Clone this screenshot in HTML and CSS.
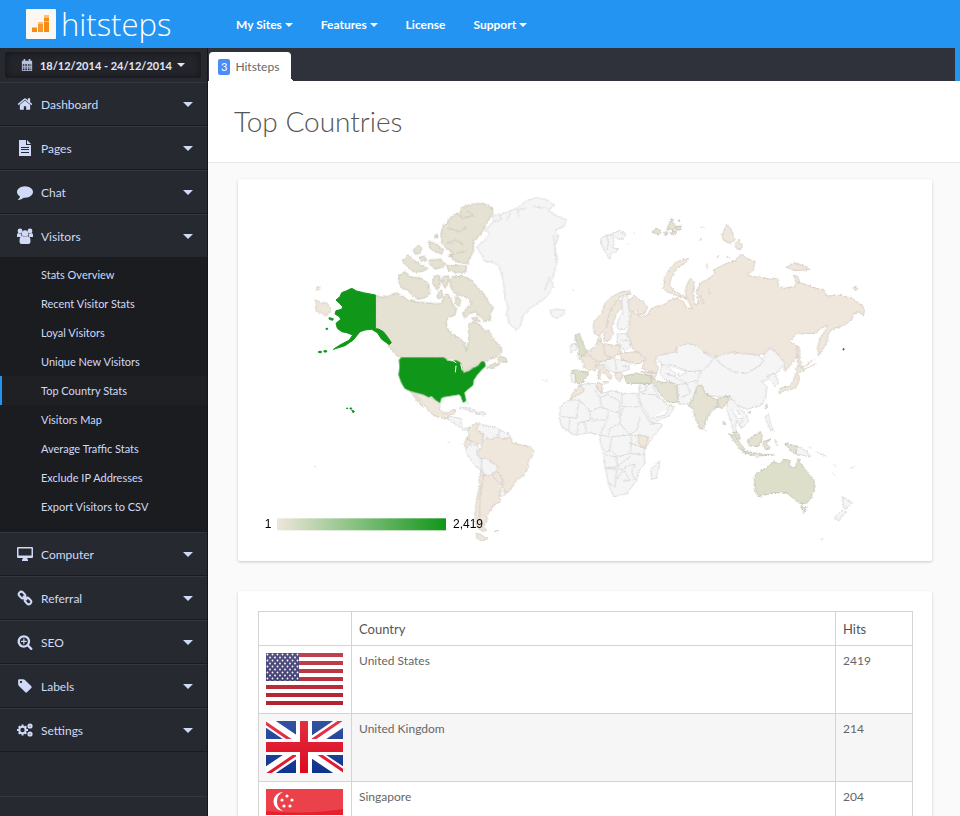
FILE: index.html
```html
<!DOCTYPE html>
<html lang="en">
<head>
    <meta charset="UTF-8">
    <meta name="viewport" content="width=device-width, initial-scale=1.0">
    <title>Hitsteps - Top Countries</title>
    <link rel="stylesheet" href="styles.css">
</head>
<body>
    <header class="topbar">
        <a href="#" class="logo">
            <svg class="logo-mark" viewBox="0 0 30 30" aria-hidden="true">
                <rect width="30" height="30" rx="1" fill="#fbf7f2"/>
                <path d="M6 18h5v5H6z" fill="#f58a14"/>
                <path d="M12 13h5v10h-5z" fill="#f79a2b"/>
                <path d="M18 6h5v17h-5z" fill="#f58a14"/>
                <path d="M6 18h5v1H6zM12 13h5v2h-5zM18 6h5v3h-5zM18 12h5v1h-5z" fill="#fbc078"/>
            </svg>
            <span class="logo-text">hitsteps</span>
        </a>
        <nav class="topnav">
            <a href="#">My Sites <span class="caret"></span></a>
            <a href="#">Features <span class="caret"></span></a>
            <a href="#">License</a>
            <a href="#">Support <span class="caret"></span></a>
        </nav>
    </header>

    <div class="page">
        <aside class="sidebar">
            <button type="button" class="date-range">
                <svg class="date-icon" viewBox="0 0 14 14" aria-hidden="true">
                    <path fill-rule="evenodd" d="M1 2h2V0h2v2h4V0h2v2h2v12H1zM2 6v2h2V6zm3 0v2h2V6zm3 0v2h2V6zm3 0v2h1V6zM2 9v1h2V9zm3 0v1h2V9zm3 0v1h2V9zm3 0v1h1V9zM2 11v2h2v-2zm3 0v2h2v-2zm3 0v2h2v-2zm3 0v2h1v-2z"/>
                </svg>
                18/12/2014 - 24/12/2014
                <span class="caret"></span>
            </button>

            <ul class="menu">
                <li>
                    <a href="#" class="menu-item">
                        <svg class="menu-icon" viewBox="0 0 1792 1792" aria-hidden="true"><path d="M1472 992v480q0 26-19 45t-45 19h-384v-384h-256v384h-384q-26 0-45-19t-19-45v-480q0-1 .5-3t.5-3l575-474 575 474q1 2 1 6zm223-69l-62 74q-8 9-21 11h-3q-13 0-21-7l-692-577-692 577q-12 8-24 7-13-2-21-11l-62-74q-8-10-7-23.5t11-21.5l719-599q32-26 76-26t76 26l244 204v-195q0-14 9-23t23-9h192q14 0 23 9t9 23v408l219 182q10 8 11 21.5t-7 23.5z"/></svg>
                        Dashboard <span class="caret"></span>
                    </a>
                </li>
                <li>
                    <a href="#" class="menu-item">
                        <svg class="menu-icon" viewBox="0 0 16 16" aria-hidden="true"><path fill-rule="evenodd" d="M2 0h7v5h5v11H2zM10 0l4 4h-4zM4 7v1h8V7zm0 2v1h8V9zm0 3v1h8v-1z"/></svg>
                        Pages <span class="caret"></span>
                    </a>
                </li>
                <li>
                    <a href="#" class="menu-item">
                        <svg class="menu-icon" viewBox="0 0 1792 1792" aria-hidden="true"><path d="M1792 896q0 174-120 321.5t-326 233-450 85.5q-70 0-145-8-198 175-460 242-49 14-114 22-17 2-30.5-9t-17.5-29v-1q-3-4-.5-12t2-10 4.5-9.5l6-9 7-8.5 8-9q7-8 31-34.5t34.5-38 31-39.5 32.5-51 27-59 26-76q-157-89-247.5-220t-90.5-281q0-130 71-248.5t191-204.5 286-136.5 348-50.5 348 50.5 286 136.5 191 204.5 71 248.5z"/></svg>
                        Chat <span class="caret"></span>
                    </a>
                </li>
                <li>
                    <a href="#" class="menu-item open">
                        <svg class="menu-icon" viewBox="0 0 16 16" aria-hidden="true"><circle cx="3" cy="3" r="2.4"/><circle cx="13" cy="3" r="2.4"/><circle cx="8" cy="5.500" r="3.200"/><path d="M0 9V7q0-2 1.500-2 1.500 1 3 .5Q4 8 5 9zM16 9V7q0-2-1.500-2-1.500 1-3 .5Q12 8 11 9zM2.500 13q0-5 3-5 2.500 2 5 0 3 0 3 5 0 3-2 3h-7q-2 0-2-3z"/></svg>
                        Visitors <span class="caret"></span>
                    </a>
                    <ul class="submenu">
                        <li><a href="#">Stats Overview</a></li>
                        <li><a href="#">Recent Visitor Stats</a></li>
                        <li><a href="#">Loyal Visitors</a></li>
                        <li><a href="#">Unique New Visitors</a></li>
                        <li><a href="#" class="active">Top Country Stats</a></li>
                        <li><a href="#">Visitors Map</a></li>
                        <li><a href="#">Average Traffic Stats</a></li>
                        <li><a href="#">Exclude IP Addresses</a></li>
                        <li><a href="#">Export Visitors to CSV</a></li>
                    </ul>
                </li>
                <li>
                    <a href="#" class="menu-item">
                        <svg class="menu-icon" viewBox="0 0 16 16" aria-hidden="true"><path fill-rule="evenodd" d="M1 1h14q1 0 1 1v9q0 1-1 1h-5l1 2v1H5v-1l1-2H1q-1 0-1-1V2q0-1 1-1zm.5 1.500v7h13v-7z"/></svg>
                        Computer <span class="caret"></span>
                    </a>
                </li>
                <li>
                    <a href="#" class="menu-item">
                        <svg class="menu-icon" viewBox="0 0 16 16" aria-hidden="true"><g class="stroked"><rect x="1.500" y="2.500" width="7" height="5" rx="2.500" transform="rotate(45 5 5)"/><rect x="7.500" y="8.500" width="7" height="5" rx="2.500" transform="rotate(45 11 11)"/><path d="M6 6l4 4"/></g></svg>
                        Referral <span class="caret"></span>
                    </a>
                </li>
                <li>
                    <a href="#" class="menu-item">
                        <svg class="menu-icon" viewBox="0 0 1792 1792" aria-hidden="true"><path d="M1088 800v64q0 13-9.500 22.500t-22.500 9.500h-224v224q0 13-9.500 22.500t-22.500 9.500h-64q-13 0-22.500-9.500t-9.500-22.500v-224h-224q-13 0-22.500-9.500t-9.500-22.500v-64q0-13 9.500-22.500t22.500-9.500h224v-224q0-13 9.500-22.500t22.500-9.500h64q13 0 22.500 9.500t9.500 22.500v224h224q13 0 22.500 9.500t9.500 22.500zm128 32q0-185-131.500-316.500t-316.500-131.500-316.500 131.500-131.500 316.500 131.500 316.500 316.500 131.500 316.500-131.500 131.500-316.500zm512 832q0 53-37.500 90.500t-90.500 37.500q-54 0-90-38l-343-342q-179 124-399 124-143 0-273.500-55.500t-225-150-150-225-55.500-273.500 55.500-273.500 150-225 225-150 273.500-55.500 273.500 55.500 225 150 150 225 55.500 273.500q0 220-124 399l343 343q37 37 37 90z"/></svg>
                        SEO <span class="caret"></span>
                    </a>
                </li>
                <li>
                    <a href="#" class="menu-item">
                        <svg class="menu-icon" viewBox="0 0 1792 1792" aria-hidden="true"><path d="M576 448q0-53-37.500-90.500t-90.500-37.500-90.500 37.500-37.500 90.500 37.500 90.500 90.500 37.500 90.500-37.500 37.500-90.500zm1067 576q0 53-37 90l-491 492q-39 37-91 37-53 0-90-37l-715-716q-38-37-64.500-101t-26.500-117v-416q0-52 38-90t90-38h416q53 0 117 26.500t102 64.500l715 714q37 39 37 91z"/></svg>
                        Labels <span class="caret"></span>
                    </a>
                </li>
                <li>
                    <a href="#" class="menu-item">
                        <svg class="menu-icon" viewBox="0 0 16 16" aria-hidden="true"><g class="stroked"><circle cx="5.500" cy="8" r="3.200"/><circle cx="13" cy="4" r="1.600"/><circle cx="13" cy="12" r="1.600"/></g><path d="M4.500 2.500h2v2h-2zM4.500 11.500h2v2h-2zM0 7h2v2H0zM9 7h2v2H9zM1 5l1.500-1.500L4 5 2.500 6.500zM7 5l1.500-1.500L10 5 8.500 6.500zM1 11l1.500-1.500L4 11l-1.500 1.500zM7 11l1.500-1.500L10 11l-1.500 1.500z"/></svg>
                        Settings <span class="caret"></span>
                    </a>
                </li>
            </ul>
            <div class="sidebar-end"></div>
        </aside>

        <main class="content">
            <div class="tabs">
                <a href="#" class="tab"><span class="badge">3</span>Hitsteps</a>
            </div>
            <div class="title-bar">
                <h1>Top Countries</h1>
            </div>

            <div class="cards">
                <section class="card">
                    <svg class="map" viewBox="0 0 2082 1146" role="img" aria-label="Hits by country">
                        <defs>
                            <linearGradient id="scale">
                                <stop offset="0" stop-color="#efe6dc"/>
                                <stop offset="1" stop-color="#109618"/>
                            </linearGradient>
                            <!-- roughens the coast lines -->
                            <filter id="coast" x="0" y="0" width="100%" height="100%">
                                <feTurbulence type="fractalNoise" baseFrequency="0.15" numOctaves="2" seed="4"/>
                                <feDisplacementMap in="SourceGraphic" scale="10" xChannelSelector="R" yChannelSelector="G"/>
                            </filter>
                        </defs>

                        <g filter="url(#coast)">
                            <!-- Canada, Greenland, Iceland -->
                            <g transform="translate(186 3)">
                                <g class="c-canada">
                                    <path d="M226 345L245 352 265 348 290 338 300 345 325 360 350 366 375 368 395 370 405 372 425 370 432 350 440 340 452 355 458 375 470 385 465 405 445 412 438 425 442 445 455 462 480 475 495 492 498 515 505 490 508 470 505 450 507 432 520 425 540 435 555 455 565 450 575 470 590 490 603 500 605 515 590 530 565 540 552 545 520 562 500 572 487 578 482 555 470 548 455 545 432 534 303 534 285 522 270 505 262 490 274 488 250 455 226 446z"/>
                                    <path d="M560 562L585 548 600 552 575 565zM592 540L600 528 618 535 620 545 600 547z"/>
                                    <path d="M445 120L460 105 480 100 485 82 520 72 550 70 575 82 580 100 565 120 550 150 535 170 520 180 520 215 505 240 505 252 470 245 455 235 460 220 440 205 425 190 423 160 430 135 445 130z"/>
                                    <path d="M445 145L480 155 500 140M470 100L490 115 520 105M440 190L470 180 490 195M500 90L520 110M470 220L500 212"/>
                                    <path d="M440 255L500 258 498 275 470 278 445 270z"/>
                                    <path d="M450 300L460 288 490 290 515 300 530 320 550 340 565 365 580 385 570 400 572 418 555 425 540 410 528 395 510 400 495 415 488 402 500 385 515 370 505 355 480 345 460 335 452 320z"/>
                                    <path d="M470 345L482 360 478 380 465 372zM515 415L530 412 540 424 522 422z"/>
                                    <path d="M298 285L315 275 330 290 365 295 385 310 390 340 378 352 355 358 335 345 325 330 305 325 295 305z"/>
                                    <path d="M308 245L325 225 340 240 365 255 385 265 365 275 340 275 325 262z"/>
                                    <path d="M340 210L355 195 365 205 360 220 345 222zM385 185L405 190 430 210 425 222 405 215 390 205zM388 240L420 238 435 250 430 262 405 265 388 252zM400 290L418 285 422 305 412 330 398 310zM430 290L448 288 445 305 435 325 425 302zM405 165h8v8h-8zM358 232L372 228 380 240 366 245z"/>
                                    <path d="M413 340L425 330 428 350 415 358zM445 225L455 222 455 230 446 230z"/>
                                </g>
                                <g class="c-none">
                                    <path d="M530 200L550 185 570 160 555 150 580 125 578 108 610 100 650 85 680 62 710 52 740 60 765 75 745 90 765 105 800 120 790 140 765 150 775 170 765 200 772 240 765 270 755 300 760 320 740 350 720 365 690 385 670 405 660 440 650 450 630 435 620 400 625 380 615 360 612 320 605 280 595 255 575 245 555 245 545 225z"/>
                                    <path d="M580 125L605 118 598 105M620 120L632 98M655 110L652 90 680 85M700 80L740 85M760 165L768 240M735 330L750 290"/>
                                    <path d="M750 392L765 388 795 390 792 402 772 415 755 408z"/>
                                </g>
                                <path class="c-low" d="M48 358L62 370 78 368 95 388 80 408 48 392zM50 322h8v8h-8z"/>
                            </g>

                            <!-- Latin America -->
                            <g transform="translate(186 453)">
                                <g class="c-none">
                                    <path d="M440 266L450 258 462 262 485 266 483 285 495 298 510 290 505 302 490 300 470 285z"/>
                                    <path d="M478 235L495 232 520 240 535 248 520 246 495 238zM530 249L545 246 560 251 550 255 532 253zM500 215l6 8M443 337h6M42 410h6M728 149h4M738 153h4"/>
                                    <path d="M535 280L560 288 585 290 600 300 595 315 580 318 570 328 558 322 550 315 545 308 530 300z"/>
                                    <path d="M600 300L625 312 632 322 610 328 595 320z"/>
                                    <path d="M497 355L515 342 535 348 530 365 540 385 545 400 543 418 525 408 510 385 497 365z"/>
                                    <path d="M598 485L612 480 618 492 602 500z"/>
                                </g>
                                <g class="c-low">
                                    <path d="M333 185L350 187 385 200 408 212 420 218 420 240 430 250 448 248 455 238 468 240 460 252 445 258 440 266 410 260 390 248 378 230 362 215 352 198 345 195 358 215 370 230 362 225 345 205z"/>
                                    <path d="M505 300L512 290 525 282 535 280 530 300 545 308 550 320 545 345 530 342 515 335 500 325 507 312z"/>
                                    <path d="M500 325L515 335 505 350 497 355 493 340z"/>
                                    <path d="M545 335L560 325 575 328 595 320 610 328 632 322 638 340 665 345 692 350 700 365 697 378 685 395 683 415 670 438 650 448 640 465 628 485 615 488 612 478 605 470 610 455 603 440 592 425 595 410 575 395 555 385 540 385 530 370 545 350z"/>
                                    <path d="M552 432L575 430 600 462 612 465 600 480 598 500 602 515 580 525 575 540 562 550 560 575 550 590 555 600 542 590 537 560 540 500 548 455z"/>
                                    <path d="M543 418L550 432 548 455 540 490 540 520 538 560 545 590 560 600 550 605 530 590 524 560 530 510 538 470 540 430z"/>
                                    <path d="M575 430L592 425 603 442 610 455 600 462 585 448zM530 610L545 615 562 628 545 633 530 625zM585 602h10v3h-10z"/>
                                </g>
                                <path class="c-none" d="M545 385L560 387 578 400 592 412 590 425 575 430 565 438 552 432 545 412z"/>
                            </g>

                            <!-- Northern Europe and Russia -->
                            <g transform="translate(906 3)">
                                <g class="c-low">
                                    <path d="M265 360L285 348 310 365 322 382 315 400 295 405 290 390 280 395 300 410 325 405 330 390 345 380 370 375 390 360 410 355 430 365 440 385 455 385 440 350 435 330 450 295 462 305 458 340 465 375 475 370 470 335 480 310 500 300 525 280 520 270 560 250 590 240 603 222 620 235 645 245 640 270 620 285 640 290 665 292 690 298 712 295 716 322 730 325 765 320 770 305 800 315 830 325 850 330 860 348 905 345 935 355 965 375 973 390 970 405 955 395 940 400 935 420 905 440 880 445 865 460 862 485 850 505 835 528 833 500 840 475 855 455 862 435 835 450 828 460 770 460 750 485 765 495 775 500 770 530 755 550 735 575 730 545 705 510 690 502 675 520 650 525 600 520 580 515 560 525 540 530 520 528 490 515 470 495 440 492 410 500 405 520 380 525 350 530 345 545 355 565 350 580 330 575 305 565 315 545 305 530 285 515 275 500 272 480 260 460 270 440 268 420 275 400 265 380z"/>
                                    <path d="M370 325L375 290 390 265 410 245 445 235 440 245 410 265 395 290 388 315 400 330 435 350 440 358 410 345 380 335z"/>
                                    <path d="M545 165L560 135 575 150 585 180 570 190 550 180zM585 190L598 180 607 200 600 210 588 204zM738 262L765 248 790 258 810 268 790 270 765 272zM762 285L774 290 778 305 766 305zM938 325L948 322 955 326 948 331z"/>
                                    <path d="M770 498L778 502 780 540 786 560 774 568 772 540z"/>
                                    <path d="M160 440L162 425 185 400 195 370 215 350 245 335 270 333 272 342 255 345 240 350 230 365 215 385 205 410 200 440 190 455 175 468 163 460z"/>
                                    <path d="M200 450L205 410 215 385 230 362 242 360 248 380 230 400 222 420 215 445 220 460 210 478 195 485 190 465zM172 478L182 470 184 490 176 495zM505 325l4 20M480 345l12 30M790 570l40-20M500 250l2 16M530 230h6M560 232h8"/>
                                </g>
                                <path class="c-canada" d="M335 155L350 145 365 155 355 165zM380 150L388 130 395 116 402 132 410 140 400 148zM374 156h8v8h-8zM390 156L408 152 406 164 394 164zM408 140L424 138 420 150 410 150zM416 120h4v4h-4z"/>
                                <g class="c-none">
                                    <path d="M245 350L262 345 265 375 270 420 262 445 240 450 230 440 235 420 248 400z"/>
                                    <path d="M232 462L255 460 268 480 272 500 255 512 240 500 232 485zM240 480L265 482M92 495L108 488 110 510 92 518z"/>
                                    <path d="M182 175L200 165 216 164 222 186 218 204 236 206 226 218 215 218 208 238 195 215 185 195zM216 160L236 154 258 160 252 174 232 178zM200 165L206 190 200 210M278 160h8M258 192h8M480 142h14M477 178h8M95 331h5"/>
                                </g>
                                <path class="c-mid" d="M105 465L118 460 125 480 135 505 143 518 130 526 112 528 118 510 110 490z"/>
                            </g>

                            <!-- Southern Europe, Africa, Asia, Oceania -->
                            <g transform="translate(906 483)">
                                <g class="c-none">
                                    <path d="M350 48L380 42 410 35 412 20 440 12 470 15 495 40 522 55 510 72 490 92 460 95 430 90 400 75 375 85 365 70 352 60z"/>
                                    <path d="M365 75L400 75 440 95 490 92 480 105 470 130 475 150 455 180 450 195 415 190 412 135 390 125 375 120 360 100zM375 100L400 108 440 130 410 135M440 130L470 120M380 80L420 108 440 95M440 130L450 160 425 172"/>
                                    <path d="M480 100L510 70 525 52 545 75 580 95 620 100 665 72 675 40 690 25 705 35 735 70 715 95 690 105 680 120 665 125 680 140 678 170 665 195 620 208 590 195 570 170 540 172 500 165 485 140 470 130z"/>
                                    <path d="M525 52L560 40 600 40 650 45 672 60 660 75 620 100 580 95 545 75z"/>
                                    <path d="M560 185L575 175 600 205 620 225 625 245 605 265 598 255 590 240 586 255 590 280 583 285 575 250 562 215zM575 205L590 235 612 235M590 210L600 225M598 255L610 240"/>
                                    <path d="M680 110L705 100 715 130 705 140 695 125z"/>
                                    <path d="M300 130L335 130 345 150 360 175 380 192 403 200 390 225 360 240 335 250 320 220 300 185 296 160zM300 160L345 165 380 190M335 235L375 225 385 205M315 130L320 148 300 160"/>
                                    <path d="M190 62L215 55 245 60 270 68 268 88 245 95 235 100 215 95 200 80zM225 60L230 95M245 78L268 80M93 100L105 100 108 128 95 125z"/>
                                    <path d="M88 180L60 200 58 235 65 260 100 285 150 278 180 285 180 305 190 335 195 380 205 430 220 470 260 462 290 420 295 395 315 370 312 330 335 295 368 255 360 250 330 250 305 205 290 160 240 160 215 152 190 160 185 130 130 132 105 150z"/>
                                    <path d="M88 180L118 180 150 215 185 200 180 175 165 150M118 180L110 235 65 230M150 215L152 240 110 250M185 200L205 210 200 240 152 240M180 172L205 165 240 185 238 235M245 160L247 200 300 200M247 205L240 250 270 285 290 270 300 230M205 210L240 220M200 240L180 285M240 250L210 265 205 290 180 285M215 290L210 330 190 340M215 290L270 285 275 300 270 340 235 350 210 330M270 310L315 325M270 340L312 345M195 345L230 350 232 380 190 385M232 380L250 365 270 350M230 390L225 440 205 430M190 385L250 388 260 378 285 372 275 395 285 420M250 390L228 420M250 390L270 420 245 425M270 285L310 290M90 240L85 275M115 250L112 280M135 245L138 275" fill="none"/>
                                    <path d="M335 385L360 362 350 415 332 418zM770 318L795 330 812 350 785 345 768 342zM805 320L815 325M830 335L860 350M905 470L920 478 937 488 925 500 912 508zM905 512L918 515 895 543 882 535zM932 385L943 378M875 398L885 406M882 372l6 8M676 230L685 222 690 245 700 272 690 270 682 250zM842 597h7M495 270l5 6"/>
                                </g>
                                <g class="c-low">
                                    <path d="M115 55L145 45 150 30 170 15 175 0 185 10 215 15 240 15 240 40 215 55 190 62 170 75 165 92 145 90 130 80 130 65z"/>
                                    <path d="M240 40L290 35 318 55 300 70 285 72 270 65 245 60zM165 78L190 72 200 90 215 108 210 120 200 105 180 92zM225 100L240 95 250 105 240 125 228 115zM175 95h6v22h-6zM190 125h14v4h-14z"/>
                                    <path d="M145 45L170 65 190 62M190 15L195 45 215 55M305 95L350 100 345 112 325 108z"/>
                                    <path d="M90 180L95 165 105 152 118 135 132 145 130 155 108 168zM170 130L185 130 185 160 172 150zM295 285L325 290 315 325 295 310z"/>
                                    <path d="M718 158L722 145 750 138 760 120 770 95 778 110 775 128 765 145 745 150zM765 88L775 78 795 88 778 98zM820 60L785 85"/>
                                </g>
                                <g class="c-canada">
                                    <path d="M470 140L485 135 495 160 530 180 545 172 570 168 560 190 545 205 530 198 510 220 497 240 490 268 480 265 465 235 460 205 445 198 460 175zM530 180L535 200"/>
                                    <path d="M332 110L350 122 370 128 390 125 410 135 412 160 415 185 395 188 375 180 355 155 340 130z"/>
                                    <path d="M565 280L585 290 605 315 615 330 600 328 580 300zM605 332L650 340 700 345 650 348 610 338zM580 278L590 276 602 298 592 296zM622 300L640 288 660 275 668 290 655 320 630 318zM670 305L690 298 680 312 690 325 678 330 670 318zM705 298L712 318M735 310L770 318 768 342 750 330zM675 205L682 190 680 205zM550 245h4v8h-4zM625 215h5v5h-5z"/>
                                </g>
                                <g class="c-mid">
                                    <path d="M95 92L110 90 145 97 135 120 120 132 108 130 105 102 95 100z"/>
                                    <path d="M252 108L290 100 332 108 335 130 300 130 260 130z"/>
                                    <path d="M643 410L650 398 680 385 700 365 722 372 730 358 750 362 748 378 765 385 775 355 785 375 800 395 822 420 824 445 812 475 800 490 780 490 760 475 740 458 700 458 655 470 645 450z"/>
                                    <path d="M782 500L800 500 793 522z"/>
                                </g>
                            </g>
                        </g>

                        <!-- United States -->
                        <g class="c-top">
                            <path transform="translate(186 453)" d="M303 84H432L440 90 455 95 468 92 480 98 485 115 490 130 505 125 520 115 535 108 545 95 553 97 556 108 545 118 530 135 520 150 518 165 500 180 492 188 497 212 490 217 484 200 478 192 455 196 430 200 422 205 420 217 408 210 395 198 385 200 370 192 350 187 330 182 315 175 305 158 297 135 300 110 298 90z"/>
                            <path transform="translate(186 3)" d="M108 360L120 350 125 338 140 332 155 325 170 333 190 338 226 345V446L235 447 250 455 262 470 274 488 268 494 245 478 232 458 215 448 195 450 180 455 160 480 135 497 100 508 120 495 148 480 158 465 140 458 125 455 112 445 108 430 122 418 118 410 105 402 108 392 125 388 128 380 118 370zM87 413L100 416 98 421 88 418zM78 445h5v3h-5zM56 514h8v4h-8zM72 512h8v4h-8zM150 684h5v3h-5zM140 684h3v2h-3zM155 690L163 694 160 699z"/>
                            <path d="M1815 509h3v4h-3z"/>
                        </g>
                        <path class="lakes" d="M627 543L642 543 655 552M654 560L652 580M668 555L673 575"/>

                        <text class="map-label" x="80" y="1048">1</text>
                        <rect x="117" y="1018" width="507" height="36" fill="url(#scale)"/>
                        <text class="map-label" x="645" y="1048">2,419</text>
                    </svg>
                </section>

                <section class="card card-table">
                    <table class="countries">
                        <thead>
                            <tr>
                                <th class="col-flag" aria-label="Flag"></th>
                                <th>Country</th>
                                <th class="col-hits">Hits</th>
                            </tr>
                        </thead>
                        <tbody>
                            <tr>
                                <td>
                                    <svg class="flag" viewBox="0 0 77 52" role="img" aria-label="Flag of the United States">
                                        <defs>
                                            <pattern id="stars" width="5" height="6" patternUnits="userSpaceOnUse">
                                                <circle cx="1.500" cy="1.500" r="0.900" fill="#fff"/>
                                                <circle cx="4" cy="4.500" r="0.900" fill="#fff"/>
                                            </pattern>
                                            <linearGradient id="shine" x2="0" y2="1">
                                                <stop offset="0" stop-color="#fff" stop-opacity=".15"/>
                                                <stop offset="1" stop-color="#fff" stop-opacity="0"/>
                                            </linearGradient>
                                        </defs>
                                        <rect width="77" height="52" fill="#fff"/>
                                        <path d="M0 2h77M0 10h77M0 18h77M0 26h77M0 34h77M0 42h77M0 50h77" stroke="#b3222f" stroke-width="4"/>
                                        <rect width="33" height="28" fill="#35336b"/>
                                        <rect width="33" height="28" fill="url(#stars)"/>
                                        <rect width="77" height="52" fill="url(#shine)"/>
                                    </svg>
                                </td>
                                <td>United States</td>
                                <td>2419</td>
                            </tr>
                            <tr>
                                <td>
                                    <svg class="flag" viewBox="0 0 77 52" role="img" aria-label="Flag of the United Kingdom">
                                        <rect width="77" height="52" fill="#0f3490"/>
                                        <path d="M0 0L77 52M77 0L0 52" stroke="#fff" stroke-width="11"/>
                                        <path d="M-2 1L36 27M79 51L41 25M77 -2L39 24M0 54L38 28" stroke="#e0142c" stroke-width="3"/>
                                        <path d="M38 0V52M0 26H77" stroke="#fff" stroke-width="16"/>
                                        <path d="M38 0V52" stroke="#dd0a20" stroke-width="8"/>
                                        <path d="M0 26H77" stroke="#dd0a20" stroke-width="10"/>
                                        <rect width="77" height="52" fill="url(#shine)"/>
                                    </svg>
                                </td>
                                <td>United Kingdom</td>
                                <td>214</td>
                            </tr>
                            <tr>
                                <td>
                                    <svg class="flag" viewBox="0 0 77 52" role="img" aria-label="Flag of Singapore">
                                        <rect width="77" height="52" fill="#fff"/>
                                        <rect width="77" height="26" fill="#e8202c"/>
                                        <path d="M0 0H77V20Q40 26 0 22z" fill="#fff" opacity=".15"/>
                                        <path d="M17 3A9.500 9.500 0 1 0 17 22 10.500 10.500 0 0 1 17 3z" fill="#fff"/>
                                        <g fill="#fff"><circle cx="21" cy="7" r="1.600"/><circle cx="16" cy="11" r="1.600"/><circle cx="26" cy="11" r="1.600"/><circle cx="18" cy="17" r="1.600"/><circle cx="24" cy="17" r="1.600"/></g>
                                    </svg>
                                </td>
                                <td>Singapore</td>
                                <td>204</td>
                            </tr>
                        </tbody>
                    </table>
                </section>
            </div>
        </main>
    </div>
</body>
</html>
```
FILE: styles.css
```css
:root {
    --blue: #2494f2;
    --dark: #272930;
    --dark-sub: #1b1c20;
    --dark-tabs: #2f323a;
    --menu-text: #d0daf8;
    --text: #666;
    --border: #d4d4d4;
}

* {
    box-sizing: border-box;
}

body {
    margin: 0;
    height: 100vh;
    display: flex;
    flex-direction: column;
    overflow: hidden;
    font-family: Lato, "Liberation Sans", sans-serif;
    font-size: 12px;
    color: var(--text);
    background: #fafafa;
}

a {
    color: inherit;
    text-decoration: none;
}

ul {
    list-style: none;
    margin: 0;
    padding: 0;
}

.caret {
    display: inline-block;
    border: 4px solid transparent;
    border-top-color: currentColor;
    border-bottom: 0;
    vertical-align: middle;
}

/* top bar */
.topbar {
    flex: none;
    display: flex;
    align-items: center;
    height: 48px;
    background: var(--blue);
    color: #fff;
}

.logo {
    display: flex;
    align-items: center;
    gap: 5px;
    width: 236px;
    padding-left: 26px;
}

.logo-mark {
    width: 30px;
    height: 30px;
}

.logo-text {
    font-family: "Open Sans", sans-serif;
    font-size: 31px;
    font-weight: 300;
    line-height: 40px;
}

.topnav {
    display: flex;
    gap: 28px;
    font-weight: 700;
}

/* sidebar */
.page {
    flex: 1;
    display: flex;
    min-height: 0;
}

.sidebar {
    flex: none;
    width: 208px;
    background: var(--dark);
    color: var(--menu-text);
    border-right: 1px solid #15161a;
    overflow: hidden;
}

.date-range {
    display: flex;
    align-items: center;
    justify-content: center;
    gap: 5px;
    width: 196px;
    height: 26px;
    margin: 4px 5px;
    padding: 0;
    border: 0;
    border-radius: 3px;
    background: #25262c;
    box-shadow: inset 0 0 8px #111216;
    color: #e0e6fa;
    font: 700 11px Lato, sans-serif;
}

.date-icon {
    width: 12px;
    height: 12px;
    margin-right: 2px;
    fill: #b8c1e0;
}

.menu-item {
    display: flex;
    align-items: center;
    height: 44px;
    padding: 0 14px 0 17px;
    border-top: 1px solid #34373f;
    border-bottom: 1px solid #1a1b20;
}

.menu-item .caret {
    margin-left: auto;
    border-width: 5px;
    border-bottom: 0;
}

.menu-icon {
    width: 16px;
    height: 16px;
    margin-right: 8px;
    fill: currentColor;
}

.menu-icon .stroked {
    fill: none;
    stroke: currentColor;
    stroke-width: 2;
}

.submenu {
    padding: 2px 0 11px;
    background: var(--dark-sub);
    font-size: 11px;
}

.submenu a {
    display: block;
    padding-left: 39px;
    border-left: 2px solid transparent;
    line-height: 29px;
}

.submenu .active {
    border-left-color: var(--blue);
    background: #1f2024;
}

.sidebar-end {
    height: 45px;
    border-bottom: 1px solid #34373f;
}

/* content */
.content {
    flex: 1;
    min-width: 0;
    overflow: hidden;
}

.tabs {
    display: flex;
    align-items: flex-end;
    height: 33px;
    padding-left: 1px;
    border-right: 5px solid var(--blue);
    background: var(--dark-tabs);
}

.tab {
    display: flex;
    align-items: center;
    gap: 5px;
    height: 29px;
    padding: 0 12px 0 9px;
    border-radius: 4px 4px 0 0;
    background: #fff;
}

/* rounded foot on the right of the tab */
.tabs::after {
    content: "";
    width: 4px;
    height: 4px;
    background: radial-gradient(circle at 100% 0, transparent 4px, #fff 4px);
}

.badge {
    padding: 0 3px;
    border-radius: 2px;
    background: #4b8df8;
    color: #fff;
    font-size: 11px;
    line-height: 16px;
}

.title-bar {
    padding: 24px 26px;
    border-bottom: 1px solid #e8e8e8;
    background: #fff;
}

h1 {
    margin: 0;
    font-size: 28px;
    font-weight: 300;
    line-height: 33px;
    color: #555;
}

.cards {
    display: grid;
    gap: 30px;
    padding: 16px 28px 30px 30px;
}

.card {
    border-radius: 2px;
    background: #fff;
    box-shadow: 0 1px 3px rgba(0, 0, 0, 0.2);
}

.card-table {
    padding: 20px 19px 20px 20px;
}

.map {
    display: block;
    width: 100%;
}

.map path {
    stroke-width: 3;
    stroke-linejoin: round;
}

.c-none {
    fill: #f5f5f5;
    stroke: #dadada;
}

.c-low {
    fill: #efe6dc;
    stroke: #d8d0c7;
}

.c-canada {
    fill: #e5e2d3;
    stroke: #cac7b9;
}

.c-mid {
    fill: #dddfcb;
    stroke: #c6c8b5;
}

.c-top {
    fill: #109618;
    stroke: #109618;
}

.lakes {
    fill: none;
    stroke: #fff;
}

.map-label {
    font-family: "Liberation Sans", Arial, sans-serif;
    font-size: 36px;
    fill: #000;
}

.countries {
    width: 100%;
    border-collapse: collapse;
    line-height: 16px;
}

.countries th,
.countries td {
    padding: 7px 7px 8px;
    border: 1px solid var(--border);
    text-align: left;
    vertical-align: top;
}

.countries th {
    padding-top: 9px;
    font-size: 13px;
    font-weight: 400;
    color: #555;
}

.countries .col-flag {
    width: 93px;
}

.countries .col-hits {
    width: 77px;
}

.countries tbody tr:nth-child(even) {
    background: #f6f6f6;
}

.flag {
    display: block;
    width: 77px;
    height: 52px;
}
```
